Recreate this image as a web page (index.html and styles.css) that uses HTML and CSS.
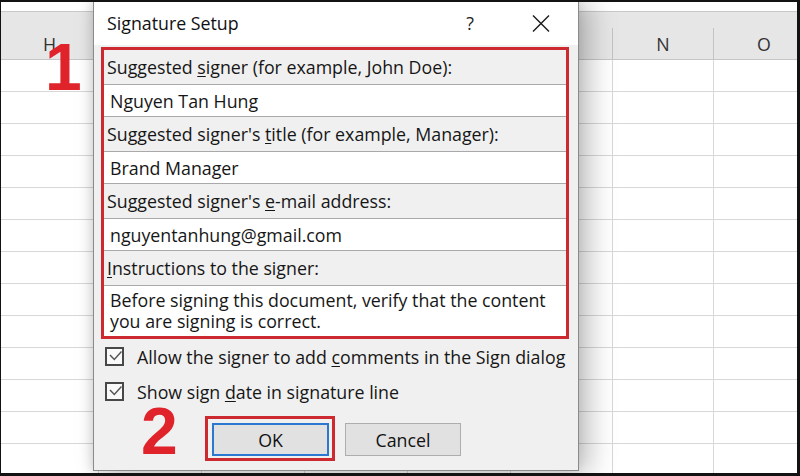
FILE: index.html
```html
<!DOCTYPE html>
<html lang="en">
<head>
<meta charset="utf-8">
<title>Signature Setup</title>
<link rel="stylesheet" href="styles.css">
</head>
<body>
<div class="screen">
  <div class="sheet">
    <div class="strip"></div>
    <div class="band"></div>
    <div class="grid head">
      <div class="hc">H</div><div class="hc"></div><div class="hc"></div><div class="hc"></div><div class="hc"></div><div class="hc"></div><div class="hc">N</div><div class="hc">O</div>
    </div>
    <div class="grid row"><div></div><div></div><div></div><div></div><div></div><div></div><div></div><div></div></div>
    <div class="grid row"><div></div><div></div><div></div><div></div><div></div><div></div><div></div><div></div></div>
    <div class="grid row"><div></div><div></div><div></div><div></div><div></div><div></div><div></div><div></div></div>
    <div class="grid row"><div></div><div></div><div></div><div></div><div></div><div></div><div></div><div></div></div>
    <div class="grid row"><div></div><div></div><div></div><div></div><div></div><div></div><div></div><div></div></div>
    <div class="grid row"><div></div><div></div><div></div><div></div><div></div><div></div><div></div><div></div></div>
    <div class="grid row"><div></div><div></div><div></div><div></div><div></div><div></div><div></div><div></div></div>
    <div class="grid row"><div></div><div></div><div></div><div></div><div></div><div></div><div></div><div></div></div>
    <div class="grid row"><div></div><div></div><div></div><div></div><div></div><div></div><div></div><div></div></div>
    <div class="grid row"><div></div><div></div><div></div><div></div><div></div><div></div><div></div><div></div></div>
    <div class="grid row"><div></div><div></div><div></div><div></div><div></div><div></div><div></div><div></div></div>
    <div class="grid row"><div></div><div></div><div></div><div></div><div></div><div></div><div></div><div></div></div>
    <div class="grid row"><div></div><div></div><div></div><div></div><div></div><div></div><div></div><div></div></div>
  </div>

  <div class="dialog">
    <div class="titlebar">
      <span class="title">Signature Setup</span>
      <span class="help">?</span>
      <svg class="close" width="18" height="17" viewBox="0 0 18 17"><path d="M1 0.5 L17 16.5 M17 0.5 L1 16.5" stroke="#1a1a1a" stroke-width="1.4" fill="none"/></svg>
    </div>
    <div class="body">
      <div class="fields">
        <div class="label"><span>Suggested <u>s</u>igner (for example, John Doe):</span></div>
        <div class="input"><span>Nguyen Tan Hung</span></div>
        <div class="label"><span>Suggested signer's <u>t</u>itle (for example, Manager):</span></div>
        <div class="input"><span>Brand Manager</span></div>
        <div class="label"><span>Suggested signer's <u>e</u>-mail address:</span></div>
        <div class="input"><span>nguyentanhung@gmail.com</span></div>
        <div class="label"><span><u>I</u>nstructions to the signer:</span></div>
        <div class="textarea">Before signing this document, verify that the content<br>you are signing is correct.</div>
      </div>
      <div class="check">
        <span class="box"><svg width="15" height="15" viewBox="0 0 15 15"><path d="M3 6 L7.3 10.5 L14.5 2.5" stroke="#555" stroke-width="1.5" fill="none"/></svg></span>
        <span>Allow the signer to add <u>c</u>omments in the Sign dialog</span>
      </div>
      <div class="check">
        <span class="box"><svg width="15" height="15" viewBox="0 0 15 15"><path d="M3 6 L7.3 10.5 L14.5 2.5" stroke="#555" stroke-width="1.5" fill="none"/></svg></span>
        <span>Show sign <u>d</u>ate in signature line</span>
      </div>
      <div class="buttons">
        <div class="highlight"><div class="btn ok">OK</div></div>
        <div class="btn cancel">Cancel</div>
      </div>
    </div>
  </div>

  <div class="num one">1</div>
  <div class="num two">2</div>
</div>
</body>
</html>
```
FILE: styles.css
```css
html, body {
  margin: 0;
  padding: 0;
  background: #121212;
}
.screen {
  position: relative;
  width: 796px;
  height: 471px;
  margin: 2px 0 0 1px;
  overflow: hidden;
  background: #ffffff;
  font-family: "Open Sans", "Noto Sans", sans-serif;
  font-size: 17.8px;
  color: #161616;
}
.sheet {
  display: flex;
  flex-direction: column;
}
.strip {
  height: 9px;
  background: #ffffff;
  border-bottom: 1px solid #c9c9c9;
}
.band {
  height: 16px;
  background: #e6e6e6;
}
.grid {
  display: grid;
  grid-template-columns: 98px 103px 103px 103px 103px 102px 101px 101px;
  width: 814px;
}
.head {
  height: 31px;
  background: #e6e6e6;
  border-bottom: 1px solid #c6c6c6;
}
.hc {
  border-right: 1px solid #c3c3c3;
  display: flex;
  align-items: center;
  justify-content: center;
  color: #333;
  padding-top: 1px;
}
.row {
  height: 32px;
}
.row > div {
  border-right: 1px solid #d8d8d8;
  border-bottom: 1px solid #d8d8d8;
}
.dialog {
  position: absolute;
  left: 92px;
  top: -2px;
  width: 486px;
  height: 471px;
  box-sizing: border-box;
  border: 1px solid #8a8a8a;
  background: #f0f0f0;
  box-shadow: 10px 2px 26px rgba(0, 0, 0, 0.26), -2px 0 10px rgba(0, 0, 0, 0.12);
  display: flex;
  flex-direction: column;
}
.titlebar {
  height: 44px;
  background: #ffffff;
  display: flex;
  align-items: center;
  padding-left: 13px;
}
.title {
  color: #111;
  flex: 1;
}
.help {
  color: #222;
  margin-right: 58px;
}
.close {
  margin-right: 28px;
  margin-top: 1px;
}
.body {
  padding: 2px 9px 0 7px;
  display: flex;
  flex-direction: column;
}
.fields {
  border: 3px solid #cc2a30;
  display: flex;
  flex-direction: column;
}
.label {
  height: 34px;
  display: flex;
  align-items: center;
  padding-left: 3px;
  background: #f0f0f0;
  white-space: nowrap;
}
.input {
  height: 33px;
  box-sizing: border-box;
  border-top: 1px solid #a9a9a9;
  border-bottom: 1px solid #a9a9a9;
  background: #ffffff;
  display: flex;
  align-items: center;
  padding-left: 6px;
}
.textarea {
  height: 51px;
  box-sizing: border-box;
  border-top: 1px solid #a9a9a9;
  background: #ffffff;
  padding: 4px 0 0 6px;
  line-height: 21px;
}
u {
  text-underline-offset: 2px;
  text-decoration-thickness: 1px;
}
.check {
  height: 35px;
  display: flex;
  align-items: center;
  padding-left: 4px;
  white-space: nowrap;
}
.box {
  width: 19px;
  height: 19px;
  box-sizing: border-box;
  border: 2px solid #484848;
  background: #fafafa;
  display: flex;
  align-items: center;
  justify-content: center;
  margin-right: 13px;
}
.box svg {
  display: block;
}
.buttons {
  display: flex;
  align-items: flex-start;
  padding: 7px 0 0 104px;
}
.highlight {
  border: 3px solid #cc2a30;
  padding: 4px 3px 2px 4px;
}
.btn {
  height: 33px;
  box-sizing: border-box;
  background: #e1e1e1;
  display: flex;
  align-items: center;
  justify-content: center;
  color: #111;
}
.ok {
  width: 117px;
  border: 2px solid #2b78d0;
}
.cancel {
  width: 116px;
  margin: 7px 0 0 10px;
  border: 1px solid #adadad;
}
.num {
  position: absolute;
  font-family: "Liberation Sans", Arial, sans-serif;
  font-weight: bold;
  font-size: 66px;
  line-height: 50px;
  height: 50px;
  color: #e0232b;
}
.one {
  left: 44px;
  top: 40px;
}
.two {
  left: 140px;
  top: 404px;
}
```
